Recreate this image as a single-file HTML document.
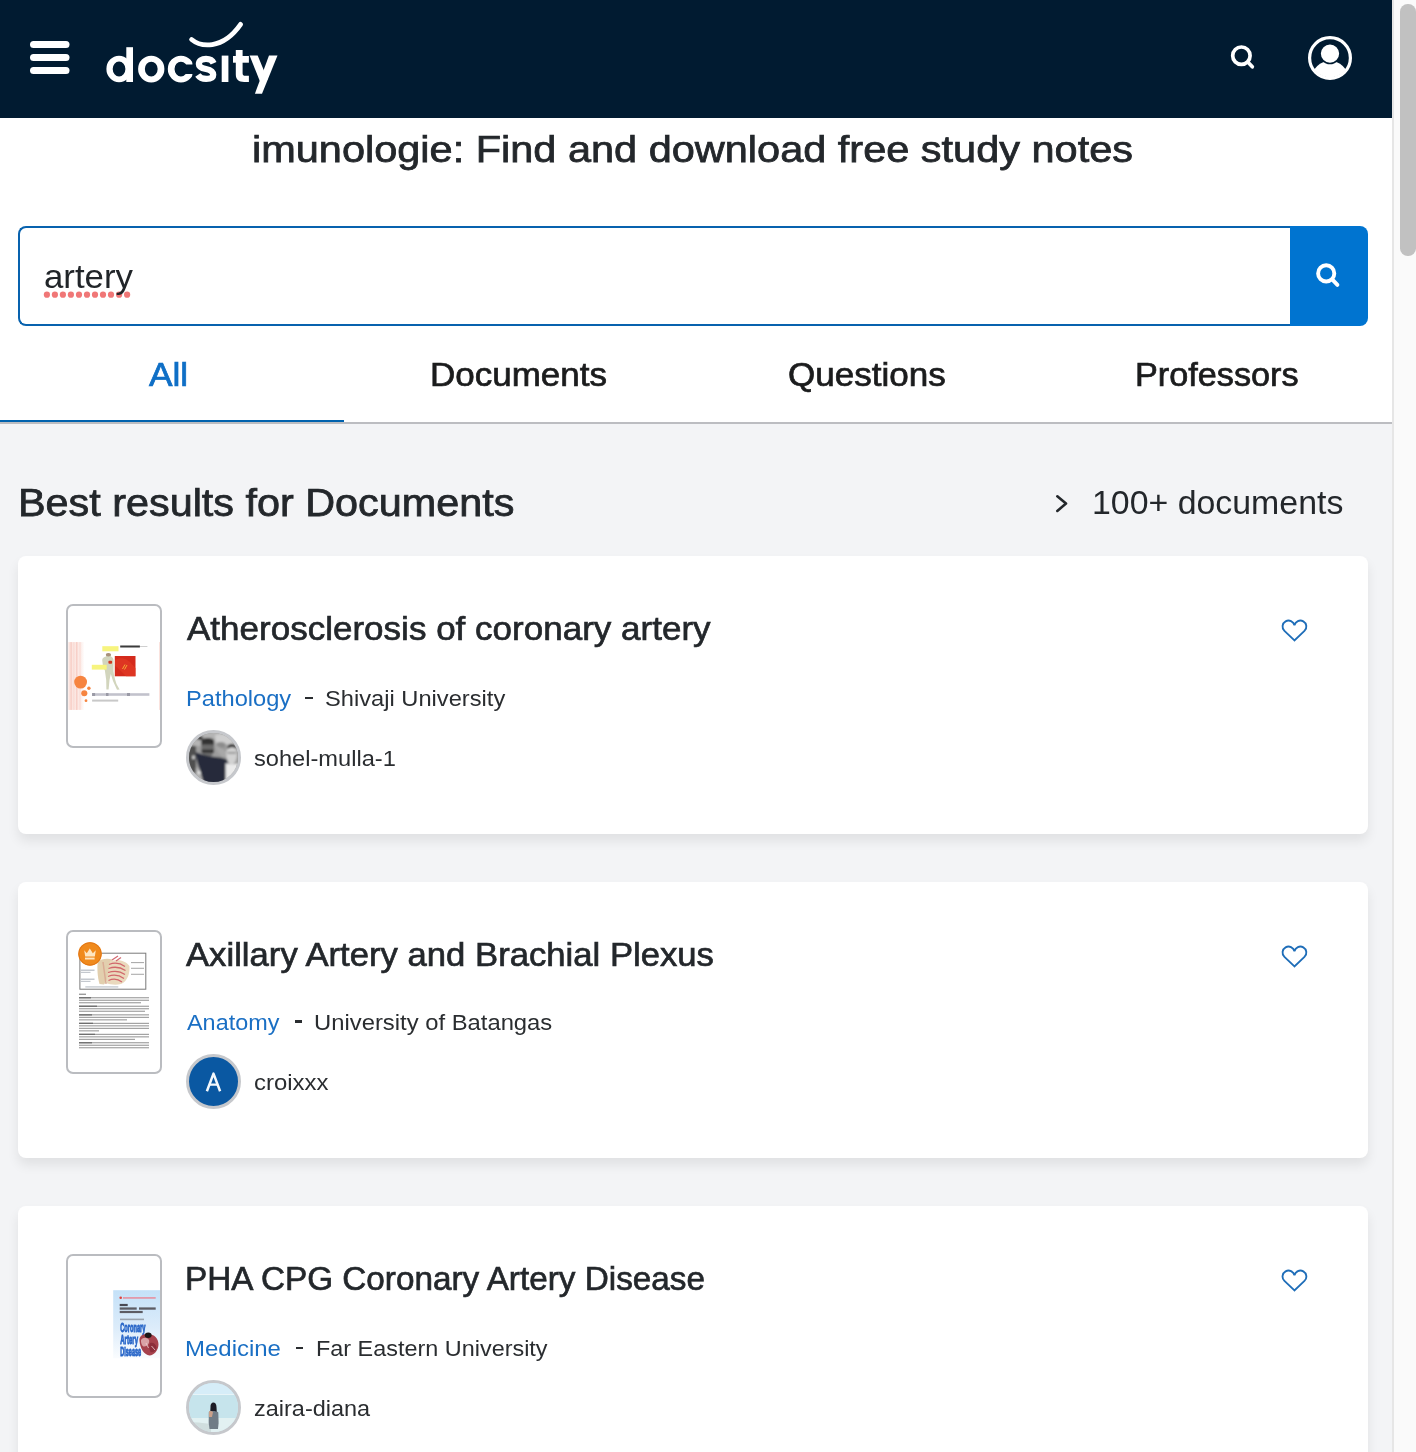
<!DOCTYPE html>
<html>
<head>
<meta charset="utf-8">
<title>docsity</title>
<style>
html,body{margin:0;padding:0;}
body{width:1416px;height:1452px;overflow:hidden;position:relative;background:#f3f4f6;font-family:"Liberation Sans",sans-serif;}
.a{position:absolute;}
.t{position:absolute;white-space:nowrap;line-height:1;}
.card{position:absolute;left:18px;width:1350px;background:#fff;border-radius:8px;box-shadow:0 7px 12px rgba(0,0,0,0.08);}
.thumbf{position:absolute;left:66px;width:92px;height:140px;border:2px solid #babcc0;border-radius:7px;background:#fff;overflow:hidden;}
.av{position:absolute;left:186px;width:49px;height:49px;border:3.5px solid #c6c8cc;border-radius:50%;overflow:hidden;}
.dash{position:absolute;height:2.6px;background:#2a2d30;}
</style>
</head>
<body>
<!-- header -->
<div class="a" style="left:0;top:0;width:1392px;height:118px;background:#011b31;"></div>
<svg class="a" style="left:0;top:0;" width="1392" height="118" viewBox="0 0 1392 118">
 <g fill="#fff">
  <rect x="30" y="41" width="39.5" height="7" rx="3.5"/>
  <rect x="30" y="54" width="39.5" height="7" rx="3.5"/>
  <rect x="30" y="67" width="39.5" height="7" rx="3.5"/>
 </g>
 <defs><clipPath id="cclip"><path d="M160 40 H192.4 V64.6 H181 V73.9 H192.4 V90 H160 Z"/></clipPath></defs>
 <g fill="#fff" fill-rule="evenodd">
  <path d="M106.40 68.95 A12.65 13.2 0 1 0 131.70 68.95 A12.65 13.2 0 1 0 106.40 68.95 Z M112.70 69.00 A6.35 7.4 0 1 0 125.40 69.00 A6.35 7.4 0 1 0 112.70 69.00 Z"/>
  <rect x="126.3" y="47.2" width="6.7" height="34.8"/>
  <path d="M138.10 69.05 A13.15 13.35 0 1 0 164.40 69.05 A13.15 13.35 0 1 0 138.10 69.05 Z M144.85 69.05 A6.4 7.4 0 1 0 157.65 69.05 A6.4 7.4 0 1 0 144.85 69.05 Z"/>
  <path clip-path="url(#cclip)" d="M167.80 69.05 A13.15 13.35 0 1 0 194.10 69.05 A13.15 13.35 0 1 0 167.80 69.05 Z M174.55 69.05 A6.4 7.4 0 1 0 187.35 69.05 A6.4 7.4 0 1 0 174.55 69.05 Z"/>
  <rect x="221.7" y="55.6" width="6.7" height="26.4"/>
  <path d="M235.8 50 H242.6 V73.2 C242.6 75.1 243.5 75.7 245.6 75.7 H248.9 V82 H244.2 C238.6 82 235.8 79.6 235.8 74.6 Z"/>
  <rect x="233" y="56" width="15.9" height="6.7"/>
  <path d="M249.6 55.6 H257.7 L267.6 79.5 L261.2 84.5 Z"/>
  <path d="M269 55.6 H277.5 L262 93.7 H254.9 Z"/>
 </g>
 <path d="M213.6 63.2 C212.4 60.3 209.6 58.8 206 58.8 C201.7 58.8 198.9 60.9 198.9 63.9 C198.9 67.1 202 68.2 206 69 C210.6 70 213.2 71.6 213.2 74.8 C213.2 77.5 210.6 78.9 206.2 78.9 C202.4 78.9 199.6 77.6 197.8 75" fill="none" stroke="#fff" stroke-width="6.3"/>
 <path d="M191.6 39.5 C200 46.5 222 51 240.6 24.4" fill="none" stroke="#fff" stroke-width="4.8" stroke-linecap="round"/>
 <g fill="none" stroke="#fff" stroke-width="3.7" stroke-linecap="round">
  <circle cx="1241.4" cy="55.7" r="8.7"/>
  <line x1="1248" y1="62.3" x2="1252.3" y2="66.8"/>
 </g>
 <defs><clipPath id="uc"><circle cx="1330" cy="58" r="19.5"/></clipPath></defs>
 <circle cx="1330" cy="58" r="20.4" fill="none" stroke="#fff" stroke-width="3.2"/>
 <ellipse cx="1330" cy="77.8" rx="18" ry="16.8" fill="#fff" clip-path="url(#uc)"/>
 <circle cx="1330" cy="53.6" r="9.9" fill="#fff" stroke="#011b31" stroke-width="1.5"/>
</svg>

<!-- white top area -->
<div class="a" style="left:0;top:118px;width:1392px;height:304px;background:#fff;"></div>
<div class="a" style="left:0;top:422px;width:1392px;height:2px;background:#bcbdc1;"></div>
<div class="a" style="left:0;top:420px;width:344px;height:2px;background:#0062ae;"></div>

<!-- search box -->
<div class="a" style="left:18px;top:226px;width:1272px;height:96px;border:2px solid #0862ae;border-right:none;border-radius:8px 0 0 8px;background:#fff;box-sizing:content-box;"></div>
<div class="a" style="left:1290px;top:226px;width:78px;height:100px;background:#0074d0;border-radius:0 8px 8px 0;"></div>
<svg class="a" style="left:1290px;top:226px;" width="78" height="100" viewBox="1290 226 78 100">
 <g fill="none" stroke="#fff" stroke-width="3.9" stroke-linecap="round">
  <circle cx="1326.2" cy="273.4" r="8.1"/>
  <line x1="1332.2" y1="279.4" x2="1337.4" y2="284.9"/>
 </g>
</svg>
<svg class="a" style="left:40px;top:288px;" width="96" height="14" viewBox="40 288 96 14">
 <g fill="#f07777">
  <circle cx="46.9" cy="294.7" r="3.1"/><circle cx="54.9" cy="294.7" r="3.1"/><circle cx="62.9" cy="294.7" r="3.1"/><circle cx="70.9" cy="294.7" r="3.1"/><circle cx="79" cy="294.7" r="3.1"/><circle cx="87" cy="294.7" r="3.1"/><circle cx="95" cy="294.7" r="3.1"/><circle cx="103" cy="294.7" r="3.1"/><circle cx="111" cy="294.7" r="3.1"/><circle cx="119.1" cy="294.7" r="3.1"/><circle cx="127.1" cy="294.7" r="3.1"/>
 </g>
</svg>

<!-- chevron -->
<svg class="a" style="left:1050px;top:490px;" width="24" height="28" viewBox="1050 490 24 28">
 <path d="M1057.3 496.3 L1066 503.6 L1057.3 510.9" fill="none" stroke="#23272b" stroke-width="2.6" stroke-linecap="round" stroke-linejoin="round"/>
</svg>

<!-- cards -->
<div class="card" style="top:556px;height:278px;"></div>
<div class="card" style="top:882px;height:276px;"></div>
<div class="card" style="top:1206px;height:276px;"></div>

<!-- thumbnails -->
<div class="thumbf" style="top:604px;">
 <svg width="92" height="140" viewBox="68 606 92 140">
  <defs>
   <linearGradient id="pk" x1="0" y1="0" x2="1" y2="0"><stop offset="0" stop-color="#fbe2dc"/><stop offset="0.75" stop-color="#fcebe7"/><stop offset="1" stop-color="#fff"/></linearGradient>
   <filter id="tb1" x="-5%" y="-5%" width="110%" height="110%"><feGaussianBlur stdDeviation="0.35"/></filter>
  </defs>
  <g filter="url(#tb1)">
  <rect x="68.4" y="642.1" width="16" height="67.8" fill="url(#pk)"/>
  <rect x="70.5" y="642.1" width="1.2" height="67.8" fill="#f7cbc2"/>
  <rect x="73.5" y="642.1" width="0.8" height="67.8" fill="#f9d6ce"/>
  <rect x="76" y="642.1" width="1.5" height="67.8" fill="#f8d0c8"/>
  <rect x="79.5" y="642.1" width="1" height="67.8" fill="#f9d9d2"/>
  <rect x="159" y="642.1" width="1.2" height="67.8" fill="#fbe3de"/>
  <circle cx="80.6" cy="682.1" r="6.4" fill="#f6843f"/>
  <circle cx="88.9" cy="688.2" r="1.7" fill="#f6843f"/>
  <circle cx="84.3" cy="693.3" r="3.05" fill="#f6843f"/>
  <circle cx="86" cy="700.7" r="1.4" fill="#f6843f"/>
  <path d="M106 654.2 C107 652.8 110 652.8 111 654.4 L110.8 656.6 C112.5 657.2 113.5 658.5 113.6 661 L113.5 668 C113 672 114.5 678 116.5 684 L119.6 689.6 L117 689.8 L113 681 L110.8 674 L109.5 680 L108.6 689.6 L106.4 689.6 L106.2 680 L104.8 670 L103.2 668 L102.2 660 C102.2 658 104 656.8 106 656.4 Z" fill="#d2d5bd"/>
  <ellipse cx="108.4" cy="654.8" rx="2.6" ry="1.8" fill="#a8917a"/>
  <rect x="108.4" y="660.7" width="3.7" height="3.1" fill="#cf3a24" rx="1"/>
  <rect x="102.3" y="646.2" width="16.2" height="5.1" fill="#f7f47e"/>
  <rect x="91.8" y="664.8" width="14.9" height="4.8" fill="#f7f47e"/>
  <rect x="114.8" y="656" width="20.7" height="20.3" fill="#d42a1c"/>
  <path d="M115 660 C120 657 126 658 130 662 L135.5 668 L135.5 676.3 L126 676.3 C122 672 118 668 115 666 Z" fill="#e33a22" opacity=".7"/>
  <path d="M122.5 669 L125 664.5 M124.5 669.5 L127 665" stroke="#f7b53a" stroke-width="0.9"/>
  <rect x="120.2" y="645.5" width="19.7" height="2" fill="#3a3a3a"/>
  <rect x="140" y="646" width="7.4" height="1" fill="#cfcfcf"/>
  <rect x="92.1" y="693.2" width="57.3" height="2.6" fill="#c2c2cc"/><g fill="#9a9aa6"><rect x="92.1" y="693" width="3" height="3"/><rect x="106" y="693" width="2.5" height="3"/><rect x="127" y="693" width="3" height="3"/></g>
  <rect x="92.1" y="699.6" width="26.1" height="2" fill="#c8c8c8"/>
  </g>
 </svg>
</div>
<div class="thumbf" style="top:930px;">
 <svg width="92" height="140" viewBox="68 932 92 140">
  <defs><filter id="tb2" x="-5%" y="-5%" width="110%" height="110%"><feGaussianBlur stdDeviation="0.35"/></filter></defs>
  <g filter="url(#tb2)">
  <rect x="79.9" y="953.2" width="65.9" height="36" fill="#fff" stroke="#7a7a7a" stroke-width="1"/>
  <path d="M97.7 962 C101 958.6 108 958.2 112 959.5 C113 966 111 976 104 984.6 L99.5 984 C97.5 977 97 968 97.7 962 Z" fill="#e2cfae"/>
  <path d="M110 961 C118 959 126 960.5 129.4 966 C130 973 128 981 121 984 C116 985.2 110 984.6 106 983 C108 976 109 968 110 961 Z" fill="#ead9bd"/>
  <g fill="none" stroke="#cf5b63" stroke-width="1.3" opacity=".9">
   <path d="M109 964.5 C114 962.5 120 963 125 966.5"/>
   <path d="M108.5 968.5 C114 966.5 120 967 125.5 970.5"/>
   <path d="M108 972.5 C114 970.5 120 971 125 974.5"/>
   <path d="M108 976.5 C113 974.5 119 975 124 978.5"/>
   <path d="M108.5 980.5 C113 978.5 118 979 122 982"/>
   <path d="M112 960 L118 956 M116 961 L121 957.5"/>
  </g>
  <path d="M103 962 L106 984" stroke="#d7a48e" stroke-width="1.5" opacity=".8"/>
  <rect x="131" y="962.2" width="13" height="0.9" fill="#9a9a9a"/>
  <rect x="131" y="967.8" width="13" height="0.9" fill="#9a9a9a"/>
  <rect x="131" y="973.8" width="13" height="0.9" fill="#9a9a9a"/>
  <rect x="80.5" y="969.5" width="14" height="1.5" fill="#c4c8ce"/>
  <rect x="80.5" y="971.8" width="10" height="1.2" fill="#c4c8ce"/>
  <rect x="80.5" y="978.5" width="14" height="1.5" fill="#c4c8ce"/>
  <rect x="80.5" y="980.8" width="10" height="1.2" fill="#c4c8ce"/>
  <rect x="85.3" y="986.2" width="33" height="1.4" fill="#c8ccd2"/>
  <circle cx="90" cy="953.9" r="11.75" fill="#f08a1e"/>
  <circle cx="90" cy="953.9" r="11.2" fill="none" stroke="#e27617" stroke-width="1"/>
  <path d="M84.2 950.3 L86.8 953.2 L89.8 948.4 L92.8 953.2 L95.8 950.3 L94.8 956.4 L85.2 956.4 Z" fill="#fde6c2"/>
  <rect x="85" y="957.6" width="9.6" height="1.9" fill="#fde6c2"/>
  <g fill="#9c9c9c">
   <rect x="79" y="993.6" width="7" height="1.4"/>
  </g>
  <g fill="#9a9a9a">
   <rect x="79" y="997.2" width="70" height="1.1"/><rect x="79" y="999.7" width="70" height="1.1"/><rect x="79" y="1002.2" width="62" height="1.1"/>
   <rect x="79" y="1005.7" width="70" height="1.1"/><rect x="79" y="1008.2" width="70" height="1.1"/><rect x="79" y="1010.7" width="66" height="1.1"/>
   <rect x="79" y="1014.3" width="70" height="1.1"/><rect x="79" y="1016.8" width="70" height="1.1"/><rect x="79" y="1019.3" width="48" height="1.1"/>
   <rect x="79" y="1022.8" width="70" height="1.1"/><rect x="79" y="1025.3" width="70" height="1.1"/><rect x="79" y="1027.8" width="70" height="1.1"/><rect x="79" y="1030.3" width="20" height="1.1"/>
   <rect x="79" y="1033.8" width="70" height="1.1"/><rect x="79" y="1036.3" width="70" height="1.1"/><rect x="79" y="1038.8" width="56" height="1.1"/>
   <rect x="79" y="1042.2" width="70" height="1.1"/><rect x="79" y="1044.7" width="70" height="1.1"/><rect x="79" y="1047.2" width="70" height="1.1"/>
  </g>
  <g fill="#6e6e6e">
   <rect x="79" y="997.1" width="12" height="1.3"/><rect x="79" y="1005.6" width="18" height="1.3"/><rect x="79" y="1014.2" width="13" height="1.3"/>
   <rect x="79" y="1022.7" width="14" height="1.3"/><rect x="79" y="1033.7" width="16" height="1.3"/><rect x="79" y="1042.1" width="13" height="1.3"/>
  </g>
  </g>
 </svg>
</div>
<div class="thumbf" style="top:1254px;">
 <svg width="92" height="140" viewBox="68 1256 92 140">
  <defs>
   <linearGradient id="cg" x1="0" y1="0" x2="0" y2="1"><stop offset="0" stop-color="#c4e1f8"/><stop offset="0.55" stop-color="#dcecfa"/><stop offset="1" stop-color="#fafcfe"/></linearGradient>
   <filter id="tb3" x="-5%" y="-5%" width="110%" height="110%"><feGaussianBlur stdDeviation="0.3"/></filter>
  </defs>
  <rect x="113.2" y="1290.2" width="47" height="68" fill="url(#cg)"/>
  <g filter="url(#tb3)">
  <circle cx="120.7" cy="1297.8" r="1.3" fill="#e0423c"/>
  <rect x="123" y="1297" width="32.7" height="1.8" fill="#e29aaa"/>
  <rect x="119.7" y="1303.9" width="8" height="2.2" fill="#4a4a52"/>
  <rect x="119.7" y="1307.4" width="17" height="2.3" fill="#5c5c64"/><rect x="139" y="1307.4" width="16.7" height="2.3" fill="#5c5c64"/>
  <rect x="119.7" y="1310.9" width="23" height="2.2" fill="#5c5c64"/>
  <rect x="120" y="1318.6" width="24" height="1.6" fill="#9aa3ad"/>
  <text x="120.2" y="1331.8" font-family="Liberation Sans" font-weight="bold" font-size="12.5" fill="#2866c8" stroke="#2866c8" stroke-width="0.9" textLength="25.3" lengthAdjust="spacingAndGlyphs">Coronary</text>
  <text x="120.2" y="1344.2" font-family="Liberation Sans" font-weight="bold" font-size="12.5" fill="#2866c8" stroke="#2866c8" stroke-width="0.9" textLength="17.8" lengthAdjust="spacingAndGlyphs">Artery</text>
  <text x="120.2" y="1356.3" font-family="Liberation Sans" font-weight="bold" font-size="12.5" fill="#2866c8" stroke="#2866c8" stroke-width="0.9" textLength="21" lengthAdjust="spacingAndGlyphs">Disease</text>
  <path d="M139.5 1341 C139 1336 143 1333.5 147 1334.5 C152 1333 158.6 1337 158.5 1344.5 C158.3 1350.5 154 1355.3 149.5 1355.6 C144.5 1355 140 1348.5 139.5 1341 Z" fill="#a6434d"/>
  <path d="M141 1340 C143 1337 147 1337 149 1340 C150 1343 147 1347 143.5 1346.5 C141.5 1345.5 140.8 1342.5 141 1340 Z" fill="#d9a2a6"/>
  <path d="M150 1343 C153 1342 156 1344 156.5 1347.5 C156 1351 153 1353 150.5 1352 C149 1349 149 1345 150 1343 Z" fill="#8c2f3a"/>
  <path d="M151.5 1346 L155 1350 M146 1343 L148.5 1348" stroke="#f0d0d2" stroke-width="0.8" fill="none"/>
  <ellipse cx="148.2" cy="1335.2" rx="3.4" ry="2.8" fill="#1c1414"/>
  </g>
 </svg>
</div>

<!-- avatars -->
<div class="av" style="top:730px;background:#9a9a9a;">
 <svg width="49" height="49" viewBox="0 0 49 49">
  <defs><filter id="bl1" x="-20%" y="-20%" width="140%" height="140%"><feGaussianBlur stdDeviation="1.0"/></filter></defs>
  <g filter="url(#bl1)">
  <rect x="-3" y="-3" width="55" height="55" fill="#9c9c9c"/>
  <rect x="-3" y="-3" width="55" height="16" fill="#b4b4b4"/>
  <path d="M26 2 C32 0 40 2 46 6 L48 12 C42 12 34 10 27 9 Z" fill="#cfcfcf"/>
  <ellipse cx="32" cy="12" rx="5" ry="3" fill="#8c8c8c"/>
  <rect x="8.5" y="3" width="5" height="4" fill="#3a3a3a"/>
  <path d="M-3 12 L7 13 L7 40 L-3 40 Z" fill="#505050"/>
  <rect x="3.4" y="22.6" width="2.2" height="3.4" fill="#e6e6e6"/>
  <path d="M6.8 35 L15.2 35 L15.2 49 L6.8 49 Z" fill="#b0b0b0"/>
  <rect x="9" y="38" width="3" height="3" fill="#eeeeee"/>
  <path d="M12.3 7 C14 4.5 22 4.3 25 7 L25.3 12.5 L12.3 12.5 Z" fill="#303030"/>
  <path d="M12.3 11.5 L25.1 11.5 C25.3 16 24.5 20.5 22.5 22.8 C20 24.5 16.5 24.3 14.5 22.5 C12.8 20.5 12.2 16 12.3 11.5 Z" fill="#6c6c6c"/>
  <rect x="12.5" y="16.7" width="12.5" height="3" fill="#2c2c2c"/>
  <path d="M6.8 19.2 C12 21 18 23 24 23.8 C30 24.4 35 25 38.8 27 L39 52 L15.2 52 C13.5 46 12 40 9.5 33 C7.8 28 6.8 23 6.8 19.2 Z" fill="#262c3b"/>
  <path d="M26 12 C30 14 35 16 37.5 19 L36 25 C31 23 27.5 18 26 12 Z" fill="#a8a8a8"/>
  <ellipse cx="42.6" cy="21.6" rx="5.4" ry="9.8" fill="#d2d2d2"/>
  <path d="M38.6 13.5 C40 10 45 9.8 47.5 13.2 L47 15.5 C44.5 13.8 41 14 38.6 16 Z" fill="#2a2a2a"/>
  <rect x="38.5" y="19" width="8.5" height="1.6" fill="#8a8a8a"/>
  <path d="M36.5 30 C40 31.5 45 31.8 49 30.5 L52 52 L36.5 52 Z" fill="#ebebeb"/>
  </g>
 </svg>
</div>
<div class="av" style="top:1054px;background:#0a58a2;">
 <svg width="49" height="49" viewBox="0 0 49 49">
  <path d="M17.9 34.2 L24.5 16.6 L31.1 34.2" fill="none" stroke="#f4f8fc" stroke-width="2.5" stroke-linejoin="round"/>
  <line x1="20.5" y1="27.6" x2="28.5" y2="27.6" stroke="#f4f8fc" stroke-width="2.3"/>
 </svg>
</div>
<div class="av" style="top:1380px;background:#cfe9f3;">
 <svg width="49" height="49" viewBox="0 0 49 49">
  <defs><filter id="bl3" x="-20%" y="-20%" width="140%" height="140%"><feGaussianBlur stdDeviation="0.7"/></filter></defs>
  <g filter="url(#bl3)">
  <rect x="-3" y="-3" width="55" height="15" fill="#d6edf8"/>
  <rect x="-3" y="11" width="55" height="1.2" fill="#e8f4f8"/>
  <rect x="-3" y="12" width="55" height="25" fill="#c6e4ec"/>
  <rect x="-3" y="35" width="55" height="17" fill="#e2f1f2"/>
  <path d="M-3 40 C6 38 14 40 22 41 L22 52 H-3 Z" fill="#d0dede"/>
  <path d="M21.5 24 C21.5 20.5 23.2 19.5 24.3 19.5 C26 19.5 27.5 20.8 27.5 24 L28 33 L21 33 Z" fill="#1f1f26"/>
  <path d="M19.8 29 C21 27.5 27.5 27.5 29.3 29.5 L29.6 40 L29 46 L20.5 46 L19.7 40 Z" fill="#6f7c86"/>
  <path d="M20 28.5 C21 27.8 23 28 24 29 L23 34 L20 34 Z" fill="#c9a08a"/>
  </g>
 </svg>
</div>

<!-- dashes -->
<div class="dash" style="left:305px;top:696.5px;width:7.5px;"></div>
<div class="dash" style="left:294.8px;top:1020.3px;width:7.5px;"></div>
<div class="dash" style="left:295.6px;top:1346.5px;width:7.5px;"></div>

<!-- hearts -->
<svg class="a" style="left:1278px;top:616px;" width="32" height="30" viewBox="0 0 32 30">
 <path d="M16.45 24.4 L6.44 14.95 A6.02 6.02 0 1 1 16.45 9.28 A6.02 6.02 0 1 1 26.46 14.95 Z" fill="none" stroke="#1e6db8" stroke-width="1.85" stroke-linejoin="miter" stroke-miterlimit="2"/>
</svg>
<svg class="a" style="left:1278px;top:942px;" width="32" height="30" viewBox="0 0 32 30">
 <path d="M16.45 24.4 L6.44 14.95 A6.02 6.02 0 1 1 16.45 9.28 A6.02 6.02 0 1 1 26.46 14.95 Z" fill="none" stroke="#1e6db8" stroke-width="1.85" stroke-linejoin="miter" stroke-miterlimit="2"/>
</svg>
<svg class="a" style="left:1278px;top:1266px;" width="32" height="30" viewBox="0 0 32 30">
 <path d="M16.45 24.4 L6.44 14.95 A6.02 6.02 0 1 1 16.45 9.28 A6.02 6.02 0 1 1 26.46 14.95 Z" fill="none" stroke="#1e6db8" stroke-width="1.85" stroke-linejoin="miter" stroke-miterlimit="2"/>
</svg>

<!-- scrollbar -->
<div class="a" style="left:1392px;top:0;width:24px;height:1452px;background:#fafafa;"></div>
<div class="a" style="left:1392px;top:0;width:2px;height:1452px;background:#e6e6e6;"></div>
<div class="a" style="left:1400px;top:4px;width:15.5px;height:252px;background:#c1c1c1;border-radius:7.75px;"></div>

<div class="t" id="pt" style="left:252.00px;top:131.01px;font-size:37px;letter-spacing:0.000px;color:#23272b;-webkit-text-stroke:0.75px #23272b;transform:scaleX(1.1213);transform-origin:0 0;">imunologie: Find and download free study notes</div>
<div class="t" id="q" style="left:44.00px;top:259.00px;font-size:34px;letter-spacing:0.000px;color:#212529;transform:scaleX(1.0233);transform-origin:0 0;">artery</div>
<div class="t" id="tab0" style="left:149.00px;top:357.51px;font-size:33px;letter-spacing:0.000px;color:#0f6fc6;-webkit-text-stroke:0.7px #0f6fc6;transform:scaleX(1.0684561435546505);transform-origin:0 0;">All</div>
<div class="t" id="tab1" style="left:430.00px;top:358.01px;font-size:33px;letter-spacing:0.000px;color:#1b1c1d;-webkit-text-stroke:0.7px #1b1c1d;transform:scaleX(1.0605953757225435);transform-origin:0 0;">Documents</div>
<div class="t" id="tab2" style="left:788.00px;top:358.01px;font-size:33px;letter-spacing:0.000px;color:#1b1c1d;-webkit-text-stroke:0.7px #1b1c1d;transform:scaleX(1.0623756052873035);transform-origin:0 0;">Questions</div>
<div class="t" id="tab3" style="left:1135.00px;top:358.01px;font-size:33px;letter-spacing:0.000px;color:#1b1c1d;-webkit-text-stroke:0.7px #1b1c1d;transform:scaleX(1.0373700112749984);transform-origin:0 0;">Professors</div>
<div class="t" id="best" style="left:18.00px;top:483.50px;font-size:38px;letter-spacing:0.000px;color:#23272b;-webkit-text-stroke:0.75px #23272b;transform:scaleX(1.0881071138211382);transform-origin:0 0;">Best results for Documents</div>
<div class="t" id="count" style="left:1092.00px;top:485.00px;font-size:34px;letter-spacing:0.000px;color:#23272b;transform:scaleX(0.9960161943319836);transform-origin:0 0;">100+ documents</div>
<div class="t" id="t1" style="left:187.00px;top:612.72px;font-size:32.5px;letter-spacing:0.000px;color:#23272b;-webkit-text-stroke:0.65px #23272b;transform:scaleX(1.0775788690325057);transform-origin:0 0;">Atherosclerosis of coronary artery</div>
<div class="t" id="c1" style="left:186.00px;top:688.01px;font-size:22.5px;letter-spacing:0.000px;color:#1a6fc4;transform:scaleX(1.0506990384615384);transform-origin:0 0;">Pathology</div>
<div class="t" id="u1" style="left:325.00px;top:688.01px;font-size:22.5px;letter-spacing:0.000px;color:#2a2d30;transform:scaleX(1.052083306072094);transform-origin:0 0;">Shivaji University</div>
<div class="t" id="n1" style="left:254.00px;top:748.01px;font-size:22.5px;letter-spacing:0.000px;color:#2a2d30;transform:scaleX(1.0504012564625798);transform-origin:0 0;">sohel-mulla-1</div>
<div class="t" id="t2" style="left:186.00px;top:938.81px;font-size:32.5px;letter-spacing:0.000px;color:#23272b;-webkit-text-stroke:0.65px #23272b;transform:scaleX(1.066715899810979);transform-origin:0 0;">Axillary Artery and Brachial Plexus</div>
<div class="t" id="c2" style="left:187.00px;top:1012.01px;font-size:22.5px;letter-spacing:0.000px;color:#1a6fc4;transform:scaleX(1.0402543993073068);transform-origin:0 0;">Anatomy</div>
<div class="t" id="u2" style="left:314.00px;top:1012.01px;font-size:22.5px;letter-spacing:0.000px;color:#2a2d30;transform:scaleX(1.0584709524458022);transform-origin:0 0;">University of Batangas</div>
<div class="t" id="n2" style="left:254.00px;top:1072.01px;font-size:22.5px;letter-spacing:0.000px;color:#2a2d30;transform:scaleX(1.062983253711654);transform-origin:0 0;">croixxx</div>
<div class="t" id="t3" style="left:185.00px;top:1262.81px;font-size:32.5px;letter-spacing:0.000px;color:#23272b;-webkit-text-stroke:0.65px #23272b;transform:scaleX(1.0244972414164524);transform-origin:0 0;">PHA CPG Coronary Artery Disease</div>
<div class="t" id="c3" style="left:185.00px;top:1337.51px;font-size:22.5px;letter-spacing:0.000px;color:#1a6fc4;transform:scaleX(1.0654346264882686);transform-origin:0 0;">Medicine</div>
<div class="t" id="u3" style="left:316.00px;top:1337.51px;font-size:22.5px;letter-spacing:0.000px;color:#2a2d30;transform:scaleX(1.040480655368548);transform-origin:0 0;">Far Eastern University</div>
<div class="t" id="n3" style="left:254.00px;top:1397.60px;font-size:22.5px;letter-spacing:0.000px;color:#2a2d30;transform:scaleX(1.043395793916602);transform-origin:0 0;">zaira-diana</div>
</body>
</html>
